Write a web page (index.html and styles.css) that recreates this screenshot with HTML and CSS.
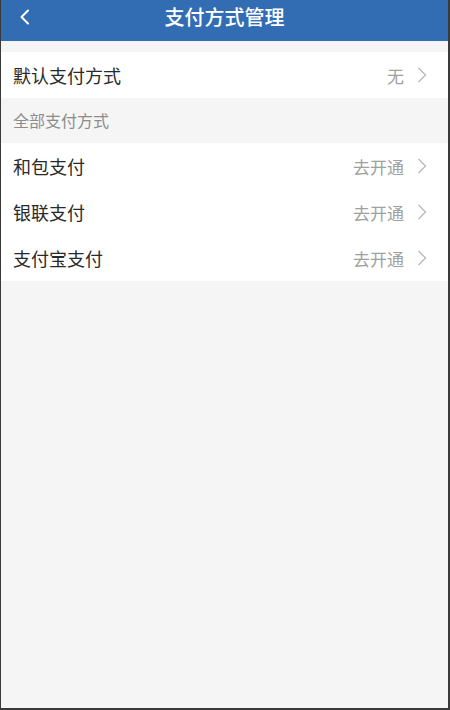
FILE: index.html
```html
<!DOCTYPE html>
<html lang="zh-CN">
<head>
<meta charset="utf-8">
<title>支付方式管理</title>
<link rel="stylesheet" href="styles.css">
</head>
<body>
<div class="frame">
  <header class="topbar">
    <div class="back">
      <svg width="12" height="16" viewBox="0 0 12 16"><path d="M9 1.5 L2.5 8 L9 14.5" fill="none" stroke="#ffffff" stroke-width="2" stroke-linecap="round" stroke-linejoin="round"/></svg>
    </div>
    <div class="title">支付方式管理</div>
    <div class="spacer"></div>
  </header>
  <div class="gap"></div>
  <div class="list">
    <div class="row">
      <span class="label">默认支付方式</span>
      <span class="value">无</span>
      <svg class="chev" width="10" height="16" viewBox="0 0 10 16"><path d="M1.5 1 L8.5 8 L1.5 15" fill="none" stroke="#b8b8b8" stroke-width="1.3"/></svg>
    </div>
  </div>
  <div class="section">全部支付方式</div>
  <div class="list">
    <div class="row">
      <span class="label">和包支付</span>
      <span class="value">去开通</span>
      <svg class="chev" width="10" height="16" viewBox="0 0 10 16"><path d="M1.5 1 L8.5 8 L1.5 15" fill="none" stroke="#b8b8b8" stroke-width="1.3"/></svg>
    </div>
    <div class="row">
      <span class="label">银联支付</span>
      <span class="value">去开通</span>
      <svg class="chev" width="10" height="16" viewBox="0 0 10 16"><path d="M1.5 1 L8.5 8 L1.5 15" fill="none" stroke="#b8b8b8" stroke-width="1.3"/></svg>
    </div>
    <div class="row">
      <span class="label">支付宝支付</span>
      <span class="value">去开通</span>
      <svg class="chev" width="10" height="16" viewBox="0 0 10 16"><path d="M1.5 1 L8.5 8 L1.5 15" fill="none" stroke="#b8b8b8" stroke-width="1.3"/></svg>
    </div>
  </div>
</div>
</body>
</html>
```
FILE: styles.css
```css
html, body {
  margin: 0;
  padding: 0;
}
body {
  font-family: "Noto Sans CJK SC", "Noto Sans", sans-serif;
  background: #f5f5f5;
}
.frame {
  width: 450px;
  height: 710px;
  box-sizing: border-box;
  background: #f5f5f5;
  border-left: 1px solid #3a3a3a;
  border-right: 2px solid #3a3a3a;
  border-bottom: 2px solid #3a3a3a;
  display: flex;
  flex-direction: column;
}
.topbar {
  height: 41px;
  background: #326db4;
  display: grid;
  grid-template-columns: 60px 1fr 60px;
  align-items: start;
}
.back {
  padding-left: 18px;
  display: flex;
  align-items: center;
  height: 34px;
}
.title {
  color: #ffffff;
  text-align: center;
  font-size: 20px;
  font-weight: 500;
  line-height: 33px;
  height: 33px;
}
.gap {
  height: 11px;
}
.list {
  background: #ffffff;
}
.row {
  height: 46px;
  display: flex;
  align-items: center;
  padding: 0 21px 0 12px;
}
.label {
  flex: 1;
  font-size: 18px;
  color: #2a2a2a;
}
.value {
  font-size: 17px;
  color: #a0a0a0;
  margin-right: 13px;
}
.chev {
  display: block;
}
.section {
  height: 45px;
  line-height: 45px;
  padding-left: 12px;
  font-size: 16px;
  color: #8c8c8c;
}
```
